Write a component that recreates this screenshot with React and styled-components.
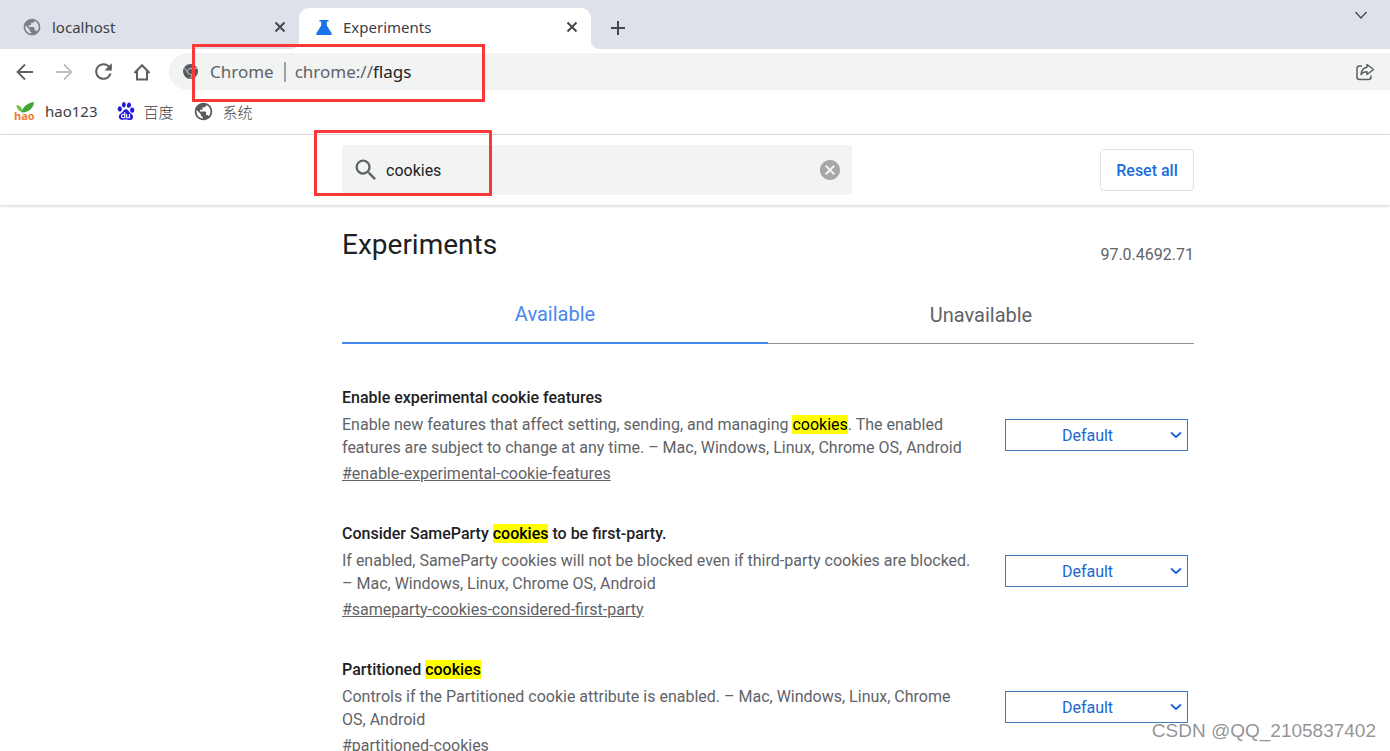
import React from 'react';
import styled, { createGlobalStyle } from 'styled-components';
import { MdPublic, MdRefresh, MdSearch, MdCancel } from 'react-icons/md';
import { SiBaidu } from 'react-icons/si';

//*******STYLING *********************************/
const GlobalStyle = createGlobalStyle`
  * {
    box-sizing: border-box;
  }

  body {
    margin: 0;
    background: #fff;
    color: #202124;
    font-family: Roboto, sans-serif;
    font-size: 16px;
    overflow: hidden;
  }

  button, input, select {
    font-family: inherit;
    font-size: inherit;
    color: inherit;
    margin: 0;
    padding: 0;
    border: none;
    background: none;
    outline: none;
  }

  svg {
    display: block;
    flex-shrink: 0;
  }
`;

const Page = styled.div`
  position: relative;
  height: 100vh;
  overflow: hidden;
`;

const Browser = styled.header`
  font-family: 'Noto Sans', 'Noto Sans CJK SC', sans-serif;
  border-bottom: 1px solid #e1e3e4;
`;

const TabStrip = styled.div`
  display: flex;
  align-items: flex-end;
  height: 49px;
  padding-right: 19px;
  background: #dee1e9;
`;

const Tab = styled.div`
  position: relative;
  display: flex;
  align-items: center;
  width: ${props => (props.$active ? '292px' : '299px')};
  height: 41px;
  padding: 0 12px 4px ${props => (props.$active ? '16px' : '22px')};
  border-radius: 10px 10px 0 0;
  background: ${props => (props.$active ? '#fff' : 'transparent')};
  color: #3c4043;
  font-size: 15px;

  &::before,
  &::after {
    content: '';
    display: ${props => (props.$active ? 'block' : 'none')};
    position: absolute;
    bottom: 0;
    width: 10px;
    height: 10px;
  }

  &::before {
    right: 100%;
    background: radial-gradient(circle at 0 0, #dee1e9 10px, #fff 11px);
  }

  &::after {
    left: 100%;
    background: radial-gradient(circle at 100% 0, #dee1e9 10px, #fff 11px);
  }
`;

const TabTitle = styled.span`
  flex: 1;
  padding-left: 10px;
`;

const IconButton = styled.button`
  display: flex;
  align-items: center;
  justify-content: center;
  width: ${props => props.$size || 20}px;
  height: ${props => props.$size || 20}px;
  color: #5c5f62;
  cursor: pointer;

  &:disabled {
    color: #bdbfc1;
  }
`;

const TabButton = styled(IconButton)`
  color: #45484b;
`;

const NewTab = styled(TabButton)`
  margin: 0 auto 11px 17px;
`;

const TabSearch = styled(TabButton)`
  align-self: flex-start;
  margin-top: 5px;
`;

const Toolbar = styled.div`
  display: flex;
  align-items: center;
  height: 45px;
  padding-left: 15px;
`;

const NavButtons = styled.nav`
  display: flex;
  gap: 19px;
`;

const Omnibox = styled.div`
  position: relative;
  display: flex;
  align-items: center;
  flex: 1;
  height: 37px;
  margin-left: 17px;
  padding: 0 15px 0 14px;
  border-radius: 19px 0 0 19px;
  background: #f2f3f3;
  color: #5f6368;
  font-size: 17px;
`;

const Scheme = styled.span`
  padding: 0 10px 0 12px;
  line-height: 20px;
`;

const Url = styled.span`
  flex: 1;
  padding-left: 9px;
  border-left: 2px solid #9fa2a5;
  line-height: 20px;

  b {
    color: #202124;
    font-weight: 400;
  }
`;

const Bookmarks = styled.div`
  display: flex;
  gap: 19px;
  height: 40px;
  padding: 0 0 6px 14px;
`;

const Bookmark = styled.a`
  display: flex;
  align-items: center;
  gap: 9px;
  color: #3c4043;
  font-size: 15px;
  font-weight: ${props => (props.$cjk ? '300' : '400')};
  text-decoration: none;
`;

// red box drawn over the parts of the page the reader should look at
const Marker = styled.div`
  position: absolute;
  top: ${props => props.$top}px;
  left: ${props => props.$left}px;
  width: ${props => props.$width}px;
  height: ${props => props.$height}px;
  border: 3px solid #fa3838;
  pointer-events: none;
  z-index: 1;
`;

const SearchHeader = styled.div`
  display: flex;
  align-items: center;
  justify-content: space-between;
  height: 70px;
  padding: 0 196px 0 342px;
  box-shadow: 0 1px 3px rgba(60, 64, 67, 0.25);
`;

const SearchBox = styled.label`
  position: relative;
  display: flex;
  align-items: center;
  flex: 0 1 510px;
  height: 50px;
  padding: 0 10px;
  border-radius: 3px;
  background: #f2f3f3;
  color: #5f6368;
`;

const SearchInput = styled.input`
  flex: 1;
  min-width: 0;
  height: 40px;
  padding-left: 6px;
  color: #202124;
`;

const ClearButton = styled(IconButton)`
  color: #a5a8a7;
`;

const ResetButton = styled.button`
  width: 94px;
  height: 42px;
  border: 1px solid #dfe1e4;
  border-radius: 4px;
  color: #1a6fdc;
  font-weight: 500;
  cursor: pointer;
`;

const Content = styled.main`
  padding: 0 196px 0 342px;
`;

const TitleRow = styled.div`
  display: flex;
  justify-content: space-between;
  padding-top: 21px;
`;

const Title = styled.h1`
  margin: 0;
  font-size: 28px;
  font-weight: 400;
  line-height: 38px;
`;

const Version = styled.span`
  padding-top: 18px;
  color: #5f6368;
  line-height: 22px;
`;

const Tabs = styled.div`
  display: flex;
  align-items: flex-end;
  padding-top: 20px;
`;

const FlagTab = styled.button`
  flex: 1;
  height: 58px;
  border-bottom: ${props => (props.$selected ? '2px solid #4688ec' : '1px solid #909395')};
  color: ${props => (props.$selected ? '#4688ec' : '#5f6368')};
  font-size: 20px;
  cursor: pointer;
`;

const FlagList = styled.div`
  padding-top: 41px;
`;

const Flag = styled.section`
  display: flex;
  align-items: center;
  justify-content: space-between;
  height: 100px;
  margin-bottom: 36px;
`;

const FlagText = styled.div`
  flex: 0 1 632px;
`;

const FlagName = styled.h2`
  margin: 0 0 4px;
  font-size: 16px;
  font-weight: 500;
  line-height: 23px;
`;

const Description = styled.p`
  margin: 0 0 3px;
  color: #5f6368;
  line-height: 23px;
`;

const Permalink = styled.a`
  display: block;
  color: #5f6368;
  line-height: 23px;
`;

const Mark = styled.mark`
  background: #ff0;
  color: #000;
`;

const SelectHolder = styled.div`
  display: grid;
  align-items: center;
  width: 183px;
  margin-right: 6px;
  color: #1967d2;

  > * {
    grid-area: 1 / 1;
  }

  > svg {
    justify-self: end;
    margin-right: 5px;
    pointer-events: none;
  }
`;

const Select = styled.select`
  width: 100%;
  height: 32px;
  padding-right: 18px;
  border: 1px solid #3f7db8;
  border-radius: 0;
  appearance: none;
  text-align: center;
  text-align-last: center;
`;

const Watermark = styled.div`
  position: absolute;
  right: 14px;
  bottom: 7px;
  color: rgba(110, 112, 114, 0.75);
  font-family: 'Liberation Sans', Arial, sans-serif;
  font-size: 19px;
  line-height: 26px;
  text-shadow: 1px 1px 0 #fff;
`;

//*******ICONS ***********************************/
const Stroke = ({ size, width = 2, children }) => (
  <svg width={size} height={size} viewBox={`0 0 ${size} ${size}`} fill="none" stroke="currentColor" strokeWidth={width} aria-hidden="true">
    {children}
  </svg>
);

const CloseIcon = () => (
  <Stroke size={12}><path d="M1.5 1.5l9 9M10.5 1.5l-9 9" /></Stroke>
);

const BackIcon = () => (
  <Stroke size={20} width={1.8}><path d="M18 10H3M10 2.5L2.5 10l7.5 7.5" /></Stroke>
);

const ForwardIcon = () => (
  <Stroke size={20} width={1.8}><path d="M2 10h15M10 2.5l7.5 7.5-7.5 7.5" /></Stroke>
);

const HomeIcon = () => (
  <Stroke size={20}><path d="M2.5 11L10 3.2l7.5 7.8M5 9v8.500h10V9" /></Stroke>
);

const PlusIcon = () => (
  <Stroke size={16}><path d="M8 1v14M1 8h14" /></Stroke>
);

const ShareIcon = () => (
  <Stroke size={20} width={1.5}>
    <path d="M7 4H4.500A2.500 2.500 0 0 0 2 6.500V15a2.500 2.500 0 0 0 2.500 2.500h9A2.500 2.500 0 0 0 16 15v-1.500" />
    <path d="M12 2.500l6.500 5-6.500 5V9.800c-2.800 0-4.500.7-6 2.700.3-4 2.300-6.800 6-7.300z" strokeLinejoin="round" />
  </Stroke>
);

const FlaskIcon = () => (
  <svg width="18" height="18" viewBox="0 0 18 18" fill="#1a73e8" aria-hidden="true">
    <path d="M4.500 2h9v1.600h-1.700v3.900l4.700 7.400c.6 1 .1 2.100-1.100 2.100H2.600c-1.200 0-1.700-1.100-1.100-2.100l4.700-7.400V3.600H4.500z" />
  </svg>
);

const ChromeIcon = () => (
  <svg width="15" height="15" viewBox="0 0 16 16" aria-hidden="true">
    <circle cx="8" cy="8" r="8" fill="#55595e" />
    <path d="M8 4.500h7M5 9.700L1.500 3.800M11 9.800L7.500 15.700" stroke="#c9cbcd" strokeWidth="1" />
    <circle cx="8" cy="8" r="3.200" fill="#55595e" stroke="#c9cbcd" strokeWidth="1" />
  </svg>
);

const HaoIcon = () => (
  <svg width="22" height="20" viewBox="0 0 22 20" aria-hidden="true">
    <path d="M9 11.500C5 10.500 2.500 8 2.500 4c3.500.4 6 3 6.500 7.500z" fill="#7cc142" />
    <path d="M7.500 11.500C9 5.500 13 2 20 1c-.5 6-5 10.500-12.500 10.500z" fill="#3fa535" />
    <text x="0" y="19" fill="#ee7a30" fontFamily="Open Sans, sans-serif" fontSize="11" fontWeight="700">hao</text>
  </svg>
);

const Chevron = () => (
  <Stroke size={14} width={1.8}><path d="M2 4.500l5 4.500 5-4.500" /></Stroke>
);

const TabSearchIcon = () => (
  <Stroke size={14} width={1.3}><path d="M1.500 4l5.500 6 5.500-6" /></Stroke>
);
//********************************************** */

const flags = [
  {
    id: 'enable-experimental-cookie-features',
    name: 'Enable experimental cookie features',
    description: 'Enable new features that affect setting, sending, and managing [cookies]. The enabled features are subject to change at any time. – Mac, Windows, Linux, Chrome OS, Android'
  },
  {
    id: 'sameparty-cookies-considered-first-party',
    name: 'Consider SameParty [cookies] to be first-party.',
    description: 'If enabled, SameParty cookies will not be blocked even if third-party cookies are blocked. – Mac, Windows, Linux, Chrome OS, Android'
  },
  {
    id: 'partitioned-cookies',
    name: 'Partitioned [cookies]',
    description: 'Controls if the Partitioned cookie attribute is enabled. – Mac, Windows, Linux, Chrome OS, Android'
  }
];

// text in square brackets is the search match
const highlight = text => text.split(/\[(.+?)\]/).map((part, i) => (
  i % 2 ? <Mark key={i}>{part}</Mark> : part
));

const FlagRow = ({ flag }) => (
  <Flag id={flag.id}>
    <FlagText>
      <FlagName id={`${flag.id}-name`}>{highlight(flag.name)}</FlagName>
      <Description>{highlight(flag.description)}</Description>
      <Permalink href={`#${flag.id}`}>#{flag.id}</Permalink>
    </FlagText>
    <SelectHolder>
      <Select aria-labelledby={`${flag.id}-name`} defaultValue="Default">
        <option>Default</option>
        <option>Enabled</option>
        <option>Disabled</option>
      </Select>
      <Chevron />
    </SelectHolder>
  </Flag>
);

class App extends React.Component {
  constructor(props) {
    super(props);

    this.state = {
      search: 'cookies',
      tab: 'Available'
    };
  }

  render() {
    return (
      <Page>
        <GlobalStyle />
        <Browser>
          <TabStrip>
            <Tab>
              <MdPublic size={20} color="#7d8083" />
              <TabTitle>localhost</TabTitle>
              <TabButton $size={14} aria-label="Close tab"><CloseIcon /></TabButton>
            </Tab>
            <Tab $active>
              <FlaskIcon />
              <TabTitle>Experiments</TabTitle>
              <TabButton $size={14} aria-label="Close tab"><CloseIcon /></TabButton>
            </Tab>
            <NewTab aria-label="New tab"><PlusIcon /></NewTab>
            <TabSearch aria-label="Search tabs"><TabSearchIcon /></TabSearch>
          </TabStrip>

          <Toolbar>
            <NavButtons>
              <IconButton aria-label="Back"><BackIcon /></IconButton>
              <IconButton aria-label="Forward" disabled><ForwardIcon /></IconButton>
              <IconButton aria-label="Reload"><MdRefresh size={25} /></IconButton>
              <IconButton aria-label="Home"><HomeIcon /></IconButton>
            </NavButtons>
            <Omnibox>
              <ChromeIcon />
              <Scheme>Chrome</Scheme>
              <Url>chrome://<b>flags</b></Url>
              <IconButton aria-label="Share"><ShareIcon /></IconButton>
              <Marker $top={-9} $left={23} $width={293} $height={58} />
            </Omnibox>
          </Toolbar>

          <Bookmarks>
            <Bookmark href="#hao123"><HaoIcon />hao123</Bookmark>
            <Bookmark href="#baidu" $cjk><SiBaidu size={18} color="#2319dc" />百度</Bookmark>
            <Bookmark href="#system" $cjk><MdPublic size={21} color="#5a5d60" />系统</Bookmark>
          </Bookmarks>
        </Browser>

        <SearchHeader>
          <SearchBox>
            <MdSearch size={28} />
            <SearchInput
              aria-label="Search flags"
              value={this.state.search}
              onChange={e => this.setState({ search: e.target.value })}
            />
            <ClearButton $size={24} aria-label="Clear search" onClick={() => this.setState({ search: '' })}>
              <MdCancel size={24} />
            </ClearButton>
            <Marker $top={-15} $left={-28} $width={178} $height={66} />
          </SearchBox>
          <ResetButton>Reset all</ResetButton>
        </SearchHeader>

        <Content>
          <TitleRow>
            <Title>Experiments</Title>
            <Version>97.0.4692.71</Version>
          </TitleRow>
          <Tabs>
            {['Available', 'Unavailable'].map(tab => (
              <FlagTab key={tab} $selected={this.state.tab === tab} onClick={() => this.setState({ tab })}>
                {tab}
              </FlagTab>
            ))}
          </Tabs>
          <FlagList>
            {flags.map(flag => <FlagRow key={flag.id} flag={flag} />)}
          </FlagList>
        </Content>

        <Watermark>CSDN @QQ_2105837402</Watermark>
      </Page>
    );
  }
}

export default App;
